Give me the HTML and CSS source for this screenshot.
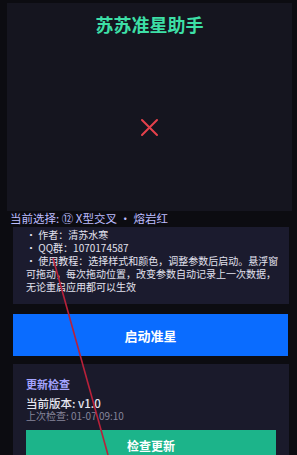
FILE: index.html
```html
<!DOCTYPE html>
<html lang="zh">
<head>
<meta charset="utf-8">
<title>苏苏准星助手</title>
<link rel="stylesheet" href="styles.css">
</head>
<body>
<div class="page">
  <section class="preview">
    <h1 class="title">苏苏准星助手</h1>
    <div class="stage">
      <svg class="cross" width="19" height="19" viewBox="0 0 19 19"><path d="M2 2 L17 17 M17 2 L2 17" stroke="#e5414b" stroke-width="2" stroke-linecap="round" fill="none"/></svg>
    </div>
  </section>
  <div class="current">当前选择: ⑫ X型交叉 · 熔岩红</div>
  <section class="info">
    <p>• 作者：清苏水寒</p>
    <p>• QQ群：1070174587</p>
    <p>• 使用教程：选择样式和颜色，调整参数后启动。悬浮窗可拖动，每次拖动位置，改变参数自动记录上一次数据，无论重启应用都可以生效</p>
  </section>
  <button class="start">启动准星</button>
  <section class="update">
    <div class="update-title">更新检查</div>
    <div class="version">当前版本: v1.0</div>
    <div class="last">上次检查: 01-07 09:10</div>
    <button class="check">检查更新</button>
  </section>
</div>
<svg class="annot" width="297" height="455" viewBox="0 0 297 455"><path d="M53 258 L108 455" stroke="#b8213a" stroke-width="1.6" fill="none"/></svg>
</body>
</html>
```
FILE: styles.css
```css
html, body {
  margin: 0;
  padding: 0;
  background: #0c0c11;
  height: 455px;
  overflow: hidden;
}
body {
  font-family: "Noto Sans CJK SC", "Noto Sans", Roboto, sans-serif;
  position: relative;
}
.page {
  display: flex;
  flex-direction: column;
  padding-top: 3px;
}
.preview {
  margin: 0 5px 0 7px;
  height: 208px;
  background: #15151f;
  display: flex;
  flex-direction: column;
}
.title {
  margin: 0;
  padding-top: 9px;
  font-size: 18px;
  line-height: 24px;
  font-weight: 700;
  color: #3ddfa6;
  text-align: center;
}
.stage {
  flex: 1;
  display: flex;
  align-items: center;
  justify-content: center;
  padding-top: 7px;
}
.cross { display: block; }
.current {
  margin-left: 10px;
  font-size: 11.5px;
  line-height: 15px;
  color: #bdbdff;
  white-space: nowrap;
}
.info {
  margin: 1px 8px 0 13px;
  background: #1b1b2e;
  padding: 1px 5px 11px 13px;
}
.info p {
  margin: 0;
  font-size: 10px;
  line-height: 13px;
  color: #e2e2ee;
}
.start {
  margin: 10px 9px 0 13px;
  height: 42px;
  border: 0;
  background: #0a6cff;
  color: #fff;
  font-family: inherit;
  font-size: 13px;
  font-weight: 700;
  padding: 0;
}
.update {
  margin: 8px 8px 0 13px;
  background: #1a1a2b;
  padding: 13px 13px 20px 13px;
  display: flex;
  flex-direction: column;
}
.update-title {
  font-size: 11px;
  line-height: 14px;
  font-weight: 700;
  color: #a4a4ff;
}
.version {
  margin-top: 6px;
  font-size: 11.5px;
  line-height: 13px;
  font-weight: 500;
  color: #e6e6f0;
}
.last {
  font-size: 10px;
  line-height: 12px;
  color: #85859a;
}
.check {
  margin-top: 8px;
  height: 30px;
  border: 0;
  padding: 0;
  background: #1cb48a;
  color: #fff;
  font-family: inherit;
  font-size: 12px;
  font-weight: 700;
}
.annot {
  position: absolute;
  left: 0;
  top: 0;
  pointer-events: none;
}
```
